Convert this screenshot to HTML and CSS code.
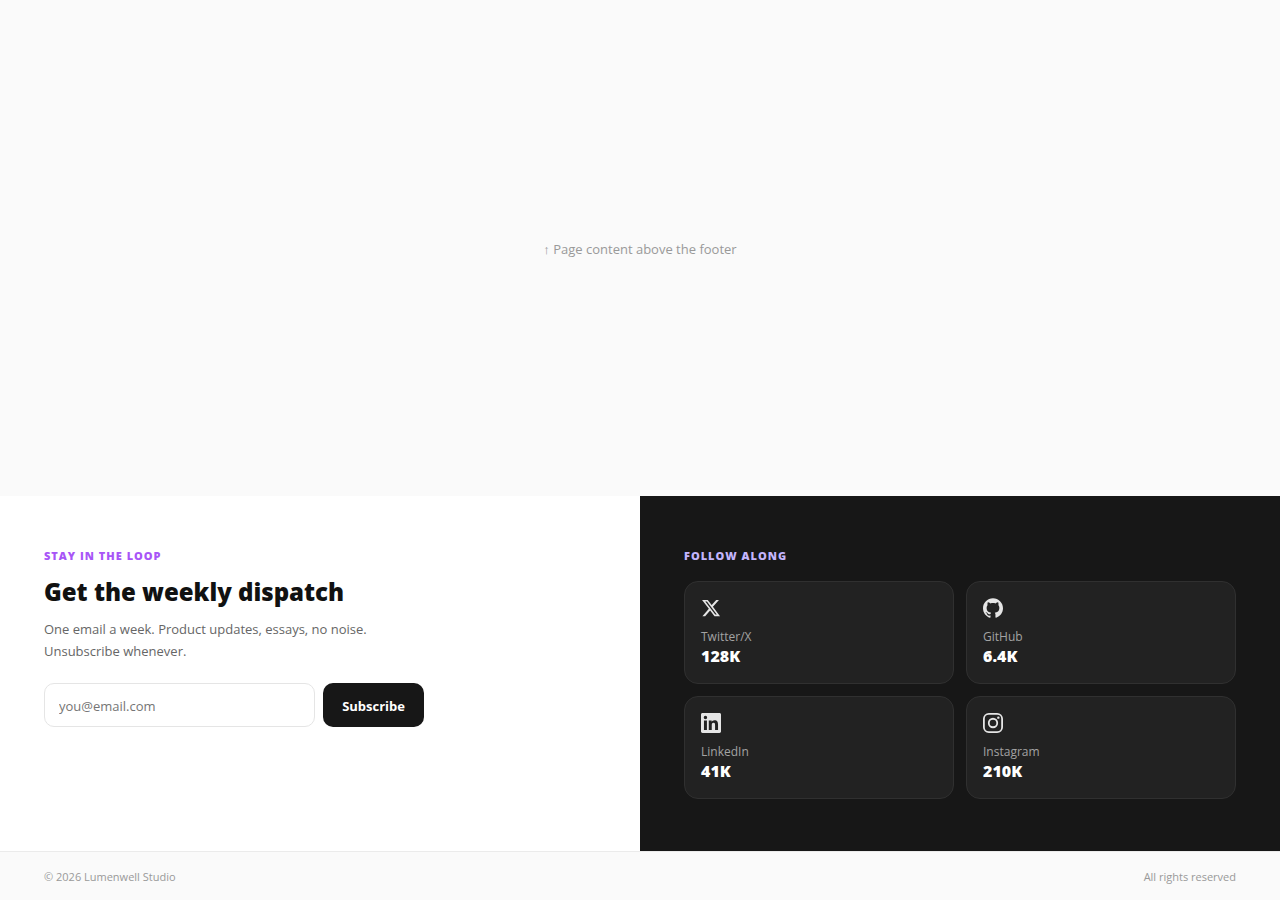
FILE: index.html
```html
<!DOCTYPE html>
<html lang="en">
<head>
<meta charset="utf-8">
<meta name="viewport" content="width=device-width, initial-scale=1">
<title>Lumenwell Studio</title>
<link rel="stylesheet" href="styles.css">
</head>
<body>
<main class="stage"><p class="stage-note">↑ Page content above the footer</p></main>
<footer class="footer">
  <div class="split">
    <section class="newsletter">
      <p class="eyebrow">STAY IN THE LOOP</p>
      <h2 class="title">Get the weekly dispatch</h2>
      <p class="lead">One email a week. Product updates, essays, no noise. Unsubscribe whenever.</p>
      <form class="signup">
        <input class="email" type="email" placeholder="you@email.com" aria-label="Email address">
        <button class="subscribe" type="submit">Subscribe</button>
      </form>
    </section>
    <section class="social">
      <h2 class="eyebrow eyebrow-light">FOLLOW ALONG</h2>
      <div class="cards">
        <a class="card" href="#twitter">
          <svg class="icon" viewBox="0 0 24 24" aria-hidden="true"><path d="M18.244 2.25h3.308l-7.227 8.26 8.502 11.24H16.17l-5.214-6.817L4.99 21.75H1.68l7.73-8.835L1.254 2.25H8.08l4.713 6.231zm-1.161 17.52h1.833L7.084 4.126H5.117z"/></svg>
          <span class="name">Twitter/X</span>
          <strong class="count">128K</strong>
        </a>
        <a class="card" href="#github">
          <svg class="icon" viewBox="0 0 24 24" aria-hidden="true"><path d="M12 .297c-6.63 0-12 5.373-12 12 0 5.303 3.438 9.8 8.205 11.385.6.113.82-.258.82-.577 0-.285-.01-1.04-.015-2.04-3.338.724-4.042-1.61-4.042-1.61C4.422 18.07 3.633 17.7 3.633 17.7c-1.087-.744.084-.729.084-.729 1.205.084 1.838 1.236 1.838 1.236 1.07 1.835 2.809 1.305 3.495.998.108-.776.417-1.305.76-1.605-2.665-.3-5.466-1.332-5.466-5.93 0-1.31.465-2.38 1.235-3.22-.135-.303-.54-1.523.105-3.176 0 0 1.005-.322 3.3 1.23.96-.267 1.98-.399 3-.405 1.02.006 2.04.138 3 .405 2.28-1.552 3.285-1.23 3.285-1.23.645 1.653.24 2.873.12 3.176.765.84 1.23 1.91 1.23 3.22 0 4.61-2.805 5.625-5.475 5.92.42.36.81 1.096.81 2.22 0 1.606-.015 2.896-.015 3.286 0 .315.21.69.825.57C20.565 22.092 24 17.592 24 12.297c0-6.627-5.373-12-12-12"/></svg>
          <span class="name">GitHub</span>
          <strong class="count">6.4K</strong>
        </a>
        <a class="card" href="#linkedin">
          <svg class="icon" viewBox="0 0 24 24" aria-hidden="true"><path d="M20.447 20.452h-3.554v-5.569c0-1.328-.027-3.037-1.852-3.037-1.853 0-2.136 1.445-2.136 2.939v5.667H9.351V9h3.414v1.561h.046c.477-.9 1.637-1.85 3.37-1.85 3.601 0 4.267 2.37 4.267 5.455v6.286zM5.337 7.433a2.062 2.062 0 1 1 0-4.125 2.062 2.062 0 0 1 0 4.125zm1.782 13.019H3.555V9h3.564v11.452zM22.225 0H1.771C.792 0 0 .774 0 1.729v20.542C0 23.227.792 24 1.771 24h20.451C23.2 24 24 23.227 24 22.271V1.729C24 .774 23.2 0 22.222 0h.003z"/></svg>
          <span class="name">LinkedIn</span>
          <strong class="count">41K</strong>
        </a>
        <a class="card" href="#instagram">
          <svg class="icon" viewBox="0 0 24 24" aria-hidden="true"><path fill-rule="evenodd" d="M7 0h10a7 7 0 0 1 7 7v10a7 7 0 0 1-7 7H7a7 7 0 0 1-7-7V7a7 7 0 0 1 7-7zm0 2.160A4.840 4.840 0 0 0 2.160 7v10A4.840 4.840 0 0 0 7 21.840h10A4.840 4.840 0 0 0 21.840 17V7A4.840 4.840 0 0 0 17 2.160zM12 5.838a6.162 6.162 0 1 1 0 12.324 6.162 6.162 0 0 1 0-12.324zM12 8a4 4 0 1 0 0 8 4 4 0 0 0 0-8z"/><circle cx="18.406" cy="5.594" r="1.440"/></svg>
          <span class="name">Instagram</span>
          <strong class="count">210K</strong>
        </a>
      </div>
    </section>
  </div>
  <div class="legal"><span>© 2026 Lumenwell Studio</span><span>All rights reserved</span></div>
</footer>
</body>
</html>
```
FILE: styles.css
```css
* { box-sizing: border-box; }
body {
  margin: 0;
  min-height: 100vh;
  display: flex;
  flex-direction: column;
  background: #fafafa;
  color: #111;
  font-family: "Segoe UI", "Open Sans", "Noto Sans", sans-serif;
}
p, h2 { margin: 0; }
.stage {
  flex: 1;
  display: grid;
  place-items: center;
  padding-top: 2px;
}
.stage-note { font-size: 13px; line-height: 18px; color: #999; }
.split { display: grid; grid-template-columns: 1fr 1fr; }
.newsletter { padding: 52px 44px; background: #fff; }
.social { padding: 52px 44px; background: #171717; }
.eyebrow {
  margin-bottom: 12px;
  font-size: 11px;
  line-height: 16px;
  font-weight: 800;
  letter-spacing: 1px;
  color: #a855f7;
}
.eyebrow-light { margin-bottom: 17px; color: #c4b5fd; }
.title {
  margin-bottom: 10px;
  font-size: 24px;
  line-height: 32px;
  font-weight: 800;
}
.lead {
  max-width: 340px;
  margin-bottom: 21px;
  font-size: 13px;
  line-height: 22px;
  color: #666;
}
.signup { display: flex; gap: 8px; max-width: 380px; }
.email {
  flex: 1;
  min-width: 0;
  height: 44px;
  padding: 2px 14px 0;
  border: 1px solid #e5e5e5;
  border-radius: 10px;
  background: #fff;
  color: #111;
  font: inherit;
  font-size: 13px;
}
.email::placeholder { color: #757575; }
.subscribe {
  padding: 2px 19px 0;
  border: 0;
  border-radius: 10px;
  background: #171717;
  color: #fff;
  font: inherit;
  font-size: 13px;
  font-weight: 700;
}
.cards { display: grid; grid-template-columns: 1fr 1fr; gap: 12px; }
.card {
  display: flex;
  flex-direction: column;
  padding: 16px;
  border: 1px solid #303030;
  border-radius: 14px;
  background: #222;
  text-decoration: none;
}
.icon { width: 20px; height: 20px; margin-bottom: 10px; fill: #e5e5e5; }
.name { font-size: 12px; line-height: 17px; color: #a3a3a3; }
.count { font-size: 16px; line-height: 22px; font-weight: 800; color: #fff; }
.legal {
  display: flex;
  justify-content: space-between;
  padding: 17px 44px 15px;
  border-top: 1px solid #ebebeb;
  font-size: 11px;
  line-height: 16px;
  color: #999;
}
```
